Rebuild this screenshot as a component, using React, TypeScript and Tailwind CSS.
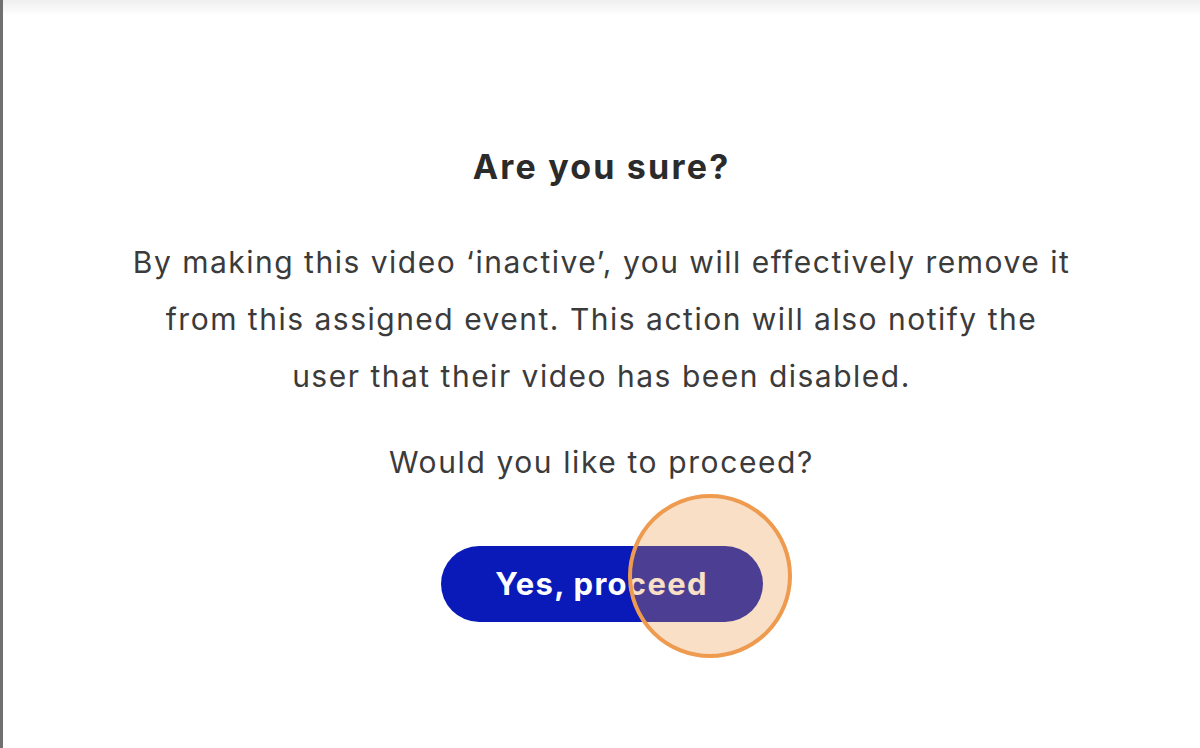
import React from 'react';

export default function App() {
  return (
    <div className="relative h-[748px] w-[1200px] overflow-hidden border-l-[3px] border-[#707070] bg-white font-['Inter',sans-serif]">
      {/* soft shade along the top edge */}
      <div className="h-[16px] bg-gradient-to-b from-[#efefef] to-white" />

      <div className="flex flex-col items-center text-center">
        <h2 className="mt-[131px] text-[34px] font-bold leading-[40px] tracking-[2.2px] text-[#2b2b2b]">Are you sure?</h2>

        <p className="mt-[47px] text-[30px] leading-[57px] tracking-[1.5px] text-[#3b3b3b]">
          By making this video ‘inactive’, you will effectively remove it
          <br />
          from this assigned event. This action will also notify the
          <br />
          user that their video has been disabled.
        </p>

        <p className="mt-[29px] text-[30px] leading-[57px] tracking-[1.6px] text-[#3b3b3b]">Would you like to proceed?</p>

        <div className="relative mt-[55px]">
          <button className="flex h-[76px] w-[322px] items-center justify-center rounded-full bg-[#0a1ab8] text-[31px] font-bold tracking-[1.3px] text-white">
            Yes, proceed
          </button>
          {/* tap marker */}
          <div className="absolute left-[187px] top-[-52px] h-[164px] w-[164px] rounded-full border-[4px] border-[#ee9a4f] bg-[#e9943e]/30" />
        </div>
      </div>
    </div>
  );
}
